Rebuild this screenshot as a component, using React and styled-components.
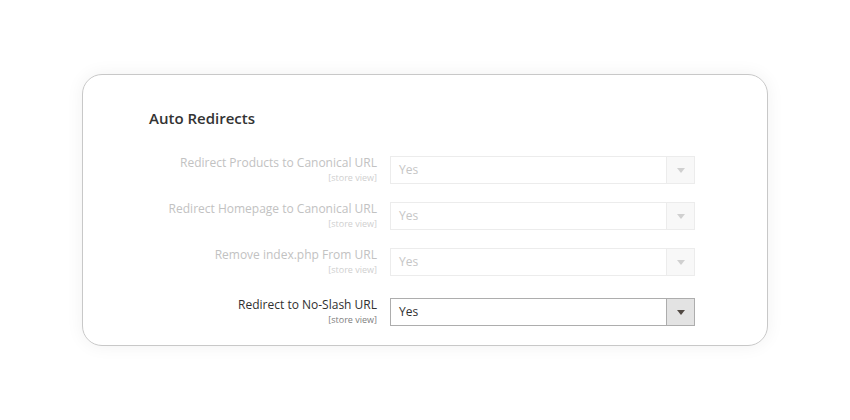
import React from 'react'
import styled, { createGlobalStyle } from 'styled-components'

const GlobalStyle = createGlobalStyle`
body{
    margin:0;
    background:#fff;
    font-family:"Open Sans", "Noto Sans", sans-serif;
}
`

const Page = styled.div`
width:850px;
height:420px;
padding:74px 0 0 82px;
box-sizing:border-box;
`

const Card = styled.div`
width:686px;
height:272px;
box-sizing:border-box;
border:1px solid #c8c8c8;
border-radius:20px;
box-shadow:0 0 18px rgba(0,0,0,.06);
padding:33px 72px 0 66px;
`

const Title = styled.h2`
margin:0 0 28px 0;
font-size:15px;
font-weight:600;
line-height:20px;
color:#333;
`

const Rows = styled.div`
display:flex;
flex-direction:column;
`

const Row = styled.div`
display:grid;
grid-template-columns:228px 305px;
column-gap:13px;
margin-bottom:${p => p.$gap}px;
`

const Label = styled.div`
text-align:right;
color:${p => p.$disabled ? '#c2c2c2' : '#303030'};
font-size:12px;
line-height:14px;
font-weight:${p => p.$disabled ? 400 : 500};

small{
    display:block;
    margin-top:3px;
    font-size:9px;
    line-height:9px;
    font-weight:400;
    color:${p => p.$disabled ? '#cfcfcf' : '#808080'};
}
`

const Select = styled.div`
height:28px;
box-sizing:border-box;
display:flex;
border:1px solid ${p => p.$disabled ? '#ececec' : '#adadad'};
background:#fff;
`

const Value = styled.div`
flex:1;
padding-left:8px;
font-size:12px;
line-height:26px;
color:${p => p.$disabled ? '#c6c6c6' : '#303030'};
`

const Arrow = styled.div`
width:27px;
display:flex;
align-items:center;
justify-content:center;
border-left:1px solid ${p => p.$disabled ? '#ececec' : '#adadad'};
background:${p => p.$disabled ? '#f8f8f8' : '#e3e3e3'};

&::after{
    content:'';
    border-left:4px solid transparent;
    border-right:4px solid transparent;
    border-top:5px solid ${p => p.$disabled ? '#d0d0d0' : '#514943'};
}
`

const fields = [
    { label: 'Redirect Products to Canonical URL', disabled: true, gap: 18 },
    { label: 'Redirect Homepage to Canonical URL', disabled: true, gap: 18 },
    { label: 'Remove index.php From URL', disabled: true, gap: 22 },
    { label: 'Redirect to No-Slash URL', disabled: false, gap: 0 },
]

function App() {
    return (
        <Page>
            <GlobalStyle/>
            <Card>
                <Title>Auto Redirects</Title>
                <Rows>
                    {fields.map(f => (
                        <Row key={f.label} $gap={f.gap}>
                            <Label $disabled={f.disabled}>
                                {f.label}
                                <small>[store view]</small>
                            </Label>
                            <Select $disabled={f.disabled}>
                                <Value $disabled={f.disabled}>Yes</Value>
                                <Arrow $disabled={f.disabled}/>
                            </Select>
                        </Row>
                    ))}
                </Rows>
            </Card>
        </Page>
    )
}

export default App
